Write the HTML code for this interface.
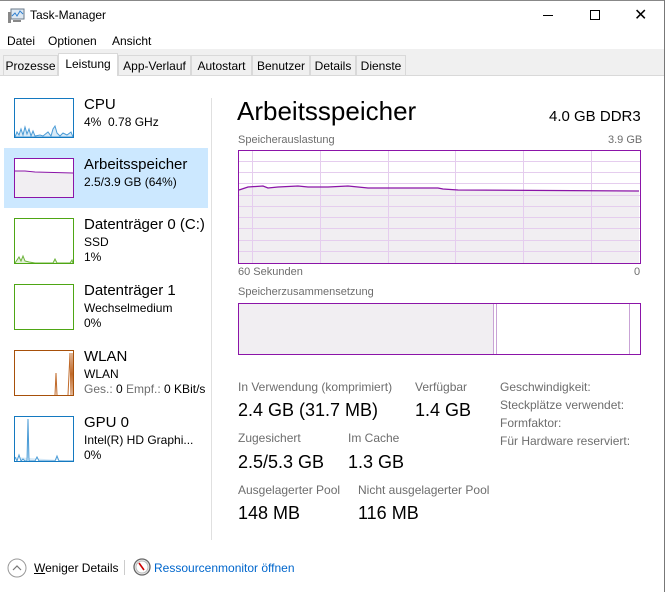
<!DOCTYPE html>
<html><head><meta charset="utf-8"><style>
*{margin:0;padding:0;box-sizing:border-box}
body{width:665px;height:592px;background:#fff;font-family:"Liberation Sans",sans-serif;position:relative;overflow:hidden;color:#000}
.a{position:absolute;white-space:nowrap}
.s{font-size:12px;color:#6d6d6d}
.v{font-size:18px;color:#000}
.tab{position:absolute;top:55px;height:20px;font-size:12px;padding-top:3px;text-align:center;border:1px solid #d9d9d9;border-bottom:none;background:#f0f0f0;color:#000}
.th{position:absolute;background:#fff;border:1px solid}
.n1{font-size:15px;color:#000}
.n2{font-size:12px;color:#000}
</style></head><body>
<div class="a" style="left:0;top:0;width:665px;height:1px;background:#888"></div>
<div class="a" style="left:664px;top:0;width:1px;height:592px;background:#777"></div>
<svg class="a" style="left:7px;top:8px" width="18" height="16"><rect x="4" y="1" width="13" height="10" fill="#dde8f2" stroke="#6a7a8a"/><polyline points="5,8 8,5 10,8 13,3 16,6" fill="none" stroke="#2f7fcf" stroke-width="1"/><rect x="1" y="4" width="3" height="11" fill="#888"/><rect x="6" y="12" width="8" height="2" fill="#888"/></svg>
<div class="a" style="left:30px;top:8px;font-size:12px">Task-Manager</div>
<div class="a" style="left:543px;top:15px;width:10px;height:1px;background:#000"></div>
<div class="a" style="left:590px;top:10px;width:10px;height:10px;border:1px solid #000"></div>
<div class="a" style="left:634px;top:5px;font-size:16px;font-weight:100">✕</div>
<div class="a" style="left:7px;top:34px;font-size:12px">Datei</div>
<div class="a" style="left:48px;top:34px;font-size:12px">Optionen</div>
<div class="a" style="left:112px;top:34px;font-size:12px">Ansicht</div>
<div class="a" style="left:0;top:49px;width:664px;height:26px;background:#f0f0f0"></div>
<div class="a" style="left:0;top:75px;width:664px;height:1px;background:#d9d9d9"></div>
<div class="tab" style="left:3px;width:55px">Prozesse</div>
<div class="tab" style="left:58px;top:53px;height:23px;width:60px;background:#fff;border-color:#d9d9d9;z-index:2">Leistung</div>
<div class="tab" style="left:118px;width:73px">App-Verlauf</div>
<div class="tab" style="left:191px;width:61px">Autostart</div>
<div class="tab" style="left:252px;width:58px">Benutzer</div>
<div class="tab" style="left:310px;width:46px">Details</div>
<div class="tab" style="left:356px;width:50px">Dienste</div>

<div class="a" style="left:211px;top:98px;width:1px;height:442px;background:#e0e0e0"></div>
<div class="a" style="left:4px;top:148px;width:204px;height:60px;background:#cce8ff"></div>

<svg class="th" style="left:14px;top:98px;border-color:#1479c0" width="60" height="40"><polygon points="0,38 2,33 4,36 6,30 8,36 10,28 12,35 14,30 16,37 18,32 20,37 25,36 28,37 33,33 36,37 38,30 40,27 42,34 45,37 48,34 52,36 56,33 58,38" fill="#d8eaf7" stroke="#4a9bd6" stroke-width="1"/></svg>
<div class="a n1" style="left:84px;top:96px">CPU</div>
<div class="a n2" style="left:84px;top:115px">4%&nbsp; 0.78 GHz</div>

<svg class="th" style="left:14px;top:158px;border-color:#8b14a8" width="60" height="40"><polygon points="0,12 10,12 20,13 58,14 58,38 0,38" fill="#f1eef2" stroke="none"/><polyline points="0,12 10,12 20,13 58,14" fill="none" stroke="#8b14a8"/></svg>
<div class="a n1" style="left:84px;top:156px">Arbeitsspeicher</div>
<div class="a n2" style="left:84px;top:175px">2.5/3.9 GB (64%)</div>

<svg class="th" style="left:14px;top:218px;border-color:#4ea614" width="60" height="46"><polyline points="0,44 4,38 6,42 8,37 10,42 14,43 20,44 38,44 40,40 42,44 55,44 57,41 58,44" fill="#e3f1d9" stroke="#6cb33a"/></svg>
<div class="a n1" style="left:84px;top:216px">Datenträger 0 (C:)</div>
<div class="a n2" style="left:84px;top:235px">SSD</div>
<div class="a n2" style="left:84px;top:250px">1%</div>

<div class="th" style="left:14px;top:284px;width:60px;height:46px;border-color:#4ea614"></div>
<div class="a n1" style="left:84px;top:282px">Datenträger 1</div>
<div class="a n2" style="left:84px;top:301px">Wechselmedium</div>
<div class="a n2" style="left:84px;top:316px">0%</div>

<svg class="th" style="left:14px;top:350px;border-color:#a7500a" width="60" height="46"><polyline points="40,44 41,22 42,44" fill="none" stroke="#c06a2a"/><polyline points="53,44 55,2 56,44 57,2 58,44" fill="none" stroke="#c06a2a"/></svg>
<div class="a n1" style="left:84px;top:348px">WLAN</div>
<div class="a n2" style="left:84px;top:367px">WLAN</div>
<div class="a n2" style="left:84px;top:382px;color:#6d6d6d">Ges.: <span style="color:#000">0</span> Empf.: <span style="color:#000">0 KBit/s</span></div>

<svg class="th" style="left:14px;top:416px;border-color:#1479c0" width="60" height="46"><polyline points="0,40 2,44 4,38 6,44 8,42 10,44 12,44 13,2 14,44 20,44 22,40 24,44 40,44 42,39 44,44 58,44" fill="#d8eaf7" stroke="#4a9bd6"/></svg>
<div class="a n1" style="left:84px;top:414px">GPU 0</div>
<div class="a n2" style="left:84px;top:433px">Intel(R) HD Graphi...</div>
<div class="a n2" style="left:84px;top:448px">0%</div>

<div class="a" style="left:237px;top:96px;font-size:26px">Arbeitsspeicher</div>
<div class="a" style="left:549px;top:108px;font-size:15px">4.0 GB DDR3</div>
<div class="a s" style="left:238px;top:134px;font-size:11px">Speicherauslastung</div>
<div class="a s" style="left:608px;top:134px;font-size:11px">3.9 GB</div>
<svg class="a" style="left:238px;top:150px" width="403" height="114">
<polygon points="1,40 10,37 25,36 30,38 40,37 60,36 70,37 90,37 110,36 130,38 190,38 200,38 205,39 220,40 401,41 401,113 1,113" fill="#f1eef2"/>
<g stroke="#e5cdee" stroke-width="1">
<line x1="0" y1="11.5" x2="403" y2="11.5"/><line x1="0" y1="22.5" x2="403" y2="22.5"/><line x1="0" y1="33.5" x2="403" y2="33.5"/><line x1="0" y1="45.5" x2="403" y2="45.5"/><line x1="0" y1="56.5" x2="403" y2="56.5"/><line x1="0" y1="67.5" x2="403" y2="67.5"/><line x1="0" y1="78.5" x2="403" y2="78.5"/><line x1="0" y1="90.5" x2="403" y2="90.5"/><line x1="0" y1="101.5" x2="403" y2="101.5"/>
<line x1="14.5" y1="0" x2="14.5" y2="114"/><line x1="82.5" y1="0" x2="82.5" y2="114"/><line x1="150.5" y1="0" x2="150.5" y2="114"/><line x1="217.5" y1="0" x2="217.5" y2="114"/><line x1="285.5" y1="0" x2="285.5" y2="114"/><line x1="353.5" y1="0" x2="353.5" y2="114"/>
</g>
<polyline points="1,40 10,37 25,36 30,38 40,37 60,36 70,37 90,37 110,36 130,38 190,38 200,38 205,39 220,40 401,41" fill="none" stroke="#8b14a8" stroke-width="1.3"/>
<rect x="0.5" y="0.5" width="402" height="113" fill="none" stroke="#8b14a8"/>
</svg>
<div class="a s" style="left:238px;top:266px;font-size:11px">60 Sekunden</div>
<div class="a s" style="left:634px;top:266px;font-size:11px">0</div>
<div class="a s" style="left:238px;top:286px;font-size:11px">Speicherzusammensetzung</div>
<svg class="a" style="left:238px;top:303px" width="403" height="52">
<rect x="1" y="1" width="254" height="50" fill="#f1eef2"/>
<line x1="255.5" y1="0" x2="255.5" y2="52" stroke="#c9a3d6"/><line x1="258.5" y1="0" x2="258.5" y2="52" stroke="#c9a3d6"/><line x1="391.5" y1="0" x2="391.5" y2="52" stroke="#c9a3d6"/>
<rect x="0.5" y="0.5" width="402" height="51" fill="none" stroke="#8b14a8"/>
</svg>

<div class="a s" style="left:238px;top:380px">In Verwendung (komprimiert)</div>
<div class="a v" style="left:238px;top:400px">2.4 GB (31.7 MB)</div>
<div class="a s" style="left:415px;top:380px">Verfügbar</div>
<div class="a v" style="left:415px;top:400px">1.4 GB</div>
<div class="a s" style="left:238px;top:431px">Zugesichert</div>
<div class="a v" style="left:238px;top:452px">2.5/5.3 GB</div>
<div class="a s" style="left:348px;top:431px">Im Cache</div>
<div class="a v" style="left:348px;top:452px">1.3 GB</div>
<div class="a s" style="left:238px;top:483px">Ausgelagerter Pool</div>
<div class="a v" style="left:238px;top:503px">148 MB</div>
<div class="a s" style="left:358px;top:483px">Nicht ausgelagerter Pool</div>
<div class="a v" style="left:358px;top:503px">116 MB</div>
<div class="a s" style="left:500px;top:380px">Geschwindigkeit:</div>
<div class="a s" style="left:500px;top:398px">Steckplätze verwendet:</div>
<div class="a s" style="left:500px;top:416px">Formfaktor:</div>
<div class="a s" style="left:500px;top:434px">Für Hardware reserviert:</div>

<svg class="a" style="left:7px;top:558px" width="20" height="20"><circle cx="10" cy="10" r="9" fill="none" stroke="#999"/><polyline points="6,12 10,8 14,12" fill="none" stroke="#777" stroke-width="1.2"/></svg>
<div class="a" style="left:34px;top:561px;font-size:12px"><u>W</u>eniger Details</div>
<div class="a" style="left:124px;top:560px;width:1px;height:15px;background:#ccc"></div>
<svg class="a" style="left:133px;top:558px" width="18" height="18"><circle cx="9" cy="9" r="8" fill="#eee" stroke="#666" stroke-width="1.3"/><circle cx="9" cy="9" r="6" fill="#fff" stroke="#bbb"/><line x1="6" y1="5" x2="11" y2="12" stroke="#c00" stroke-width="1.6"/></svg>
<div class="a" style="left:154px;top:561px;font-size:12px;color:#0066cc">Ressourcenmonitor öffnen</div>
</body></html>
